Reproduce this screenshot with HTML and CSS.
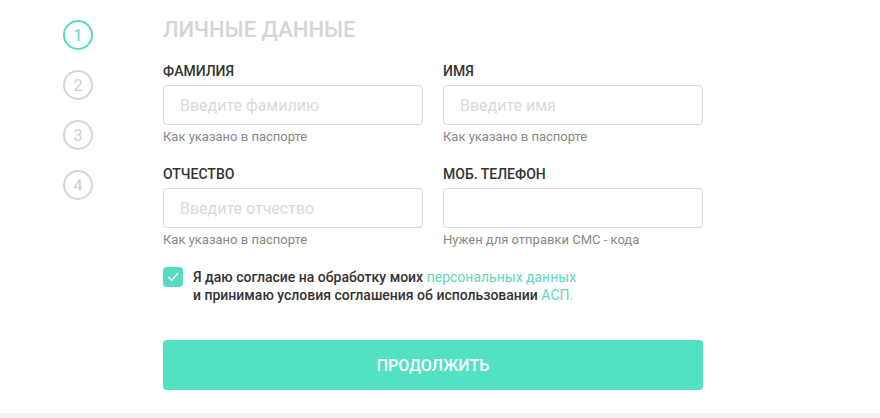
FILE: index.html
```html
<!DOCTYPE html>
<html lang="ru">
  <head>
    <meta charset="UTF-8" />
    <meta name="viewport" content="width=device-width, initial-scale=1.0" />
    <title>Личные данные</title>
    <link rel="stylesheet" href="styles.css">
  </head>
  <body>
    <div class="page">
      <ol class="steps">
        <li class="step active">1</li>
        <li class="step">2</li>
        <li class="step">3</li>
        <li class="step">4</li>
      </ol>
      <form class="form" id="personalForm">
        <h1>ЛИЧНЫЕ ДАННЫЕ</h1>
        <div class="fields">
          <div class="form-group">
            <label for="lastName">ФАМИЛИЯ</label>
            <input type="text" id="lastName" placeholder="Введите фамилию" />
            <div class="hint">Как указано в паспорте</div>
          </div>
          <div class="form-group">
            <label for="firstName">ИМЯ</label>
            <input type="text" id="firstName" placeholder="Введите имя" />
            <div class="hint">Как указано в паспорте</div>
          </div>
          <div class="form-group">
            <label for="middleName">ОТЧЕСТВО</label>
            <input type="text" id="middleName" placeholder="Введите отчество" />
            <div class="hint">Как указано в паспорте</div>
          </div>
          <div class="form-group">
            <label for="phone">МОБ. ТЕЛЕФОН</label>
            <input type="tel" id="phone" />
            <div class="hint">Нужен для отправки СМС - кода</div>
          </div>
        </div>
        <label class="consent">
          <span class="checkbox">
            <svg width="12" height="10" viewBox="0 0 12 10">
              <path d="M1.5 5.2 L4.6 8.2 L10.5 1.8" fill="none" stroke="#fff" stroke-width="1.4" stroke-linecap="round" stroke-linejoin="round" />
            </svg>
          </span>
          <span class="consent-text">
            Я даю согласие на обработку моих <a href="#">персональных данных</a><br />
            и принимаю условия соглашения об использовании <a href="#">АСП.</a>
          </span>
        </label>
        <button type="submit">ПРОДОЛЖИТЬ</button>
      </form>
    </div>
  </body>
</html>
```

FILE: styles.css
```css
body {
  font-family: Roboto, "Liberation Sans", Arial, sans-serif;
  margin: 0;
  background-color: #f2f2f2;
}
.page {
  display: flex;
  background-color: white;
  padding: 18px 0 23px 63px;
}
.steps {
  list-style: none;
  margin: 2px 0 0;
  padding: 0;
  width: 100px;
  display: flex;
  flex-direction: column;
  gap: 20px;
}
.step {
  width: 30px;
  height: 30px;
  box-sizing: border-box;
  border: 2px solid #d6d6d6;
  border-radius: 50%;
  color: #cfcfcf;
  font-size: 16px;
  display: flex;
  align-items: center;
  justify-content: center;
}
.step.active {
  border-color: #56dcc0;
  color: #56dcc0;
}
.form {
  width: 540px;
}
h1 {
  margin: 0 0 21px;
  font-size: 22px;
  line-height: 24px;
  font-weight: 500;
  color: #d3d6d9;
}
.fields {
  display: grid;
  grid-template-columns: 260px 260px;
  column-gap: 20px;
  row-gap: 21px;
}
.form-group label {
  display: block;
  font-size: 14px;
  line-height: 16px;
  font-weight: 500;
  color: #333;
  margin-bottom: 6px;
}
.form-group input {
  display: block;
  width: 100%;
  height: 40px;
  box-sizing: border-box;
  border: 1px solid #d9d9d9;
  border-radius: 4px;
  padding: 0 16px;
  font-family: inherit;
  font-size: 16px;
  color: #333;
}
.form-group input::placeholder {
  color: #d8dbde;
}
.hint {
  margin-top: 4px;
  font-size: 13px;
  line-height: 16px;
  color: #888;
}
.consent {
  display: flex;
  gap: 10px;
  margin-top: 19px;
  cursor: pointer;
}
.checkbox {
  width: 20px;
  height: 20px;
  flex: none;
  border-radius: 4px;
  background-color: #56dcc0;
  display: flex;
  align-items: center;
  justify-content: center;
}
.consent-text {
  margin-top: 1px;
  font-size: 14px;
  line-height: 18px;
  font-weight: 500;
  color: #333;
}
.consent-text a {
  color: #5fd6bd;
  text-decoration: none;
  font-weight: 400;
}
button {
  display: block;
  width: 540px;
  height: 50px;
  margin-top: 36px;
  border: none;
  border-radius: 4px;
  background-color: #52e2c1;
  color: white;
  font-family: inherit;
  font-size: 16px;
  font-weight: 500;
  cursor: pointer;
}
```
